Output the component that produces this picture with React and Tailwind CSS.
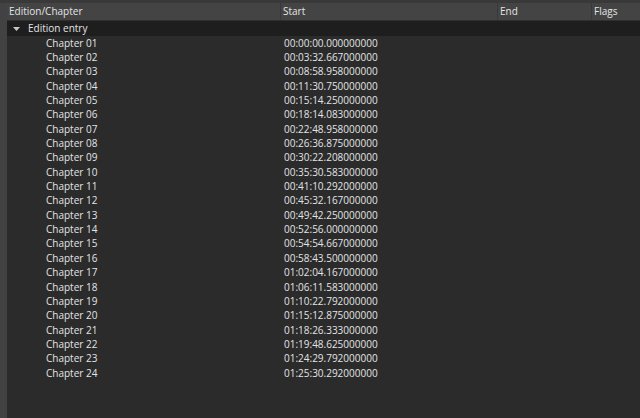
import React from 'react';

const chapters = [
  '00:00:00.000000000', '00:03:32.667000000', '00:08:58.958000000', '00:11:30.750000000',
  '00:15:14.250000000', '00:18:14.083000000', '00:22:48.958000000', '00:26:36.875000000',
  '00:30:22.208000000', '00:35:30.583000000', '00:41:10.292000000', '00:45:32.167000000',
  '00:49:42.250000000', '00:52:56.000000000', '00:54:54.667000000', '00:58:43.500000000',
  '01:02:04.167000000', '01:06:11.583000000', '01:10:22.792000000', '01:15:12.875000000',
  '01:18:26.333000000', '01:19:48.625000000', '01:24:29.792000000', '01:25:30.292000000',
];

const font = { fontFamily: '"Segoe UI", "Open Sans", sans-serif' };

const App = () => {
  return (
    <div className="w-[640px] h-[418px] bg-[#3c3c3c] flex flex-col text-[10px] text-[#e4e4e4] overflow-hidden" style={font}>
      <div className="h-[3px] bg-[#393939]" />
      <div className="flex flex-1 min-h-0">
        <div className="w-[7px] bg-[#424242]" />
        <div className="flex-1 flex flex-col bg-[#2b2b2b]">
          <div className="flex h-[18px] bg-[#444444] border-b border-[#2f2f2f] items-center">
            <div className="w-[274px] pl-[2px] border-r border-[#393939] h-full flex items-center">Edition/Chapter</div>
            <div className="w-[217px] pl-[2px] border-r border-[#393939] h-full flex items-center">Start</div>
            <div className="w-[94px] pl-[2px] border-r border-[#393939] h-full flex items-center">End</div>
            <div className="flex-1 pl-[2px] h-full flex items-center">Flags</div>
          </div>
          <div className="h-[15px] bg-[#1e1e1e] flex items-center">
            <svg width="7" height="4" viewBox="0 0 7 4" className="ml-[6px] mr-[8px]">
              <path d="M0 0 H7 L3.5 4 Z" fill="#c8c8c8" />
            </svg>
            <span>Edition entry</span>
          </div>
          {chapters.map((t, i) => (
            <div key={i} className="h-[14.35px] flex items-center">
              <div className="w-[275px] pl-[39px]">Chapter {String(i + 1).padStart(2, '0')}</div>
              <div className="pl-[2px]">{t}</div>
            </div>
          ))}
        </div>
      </div>
    </div>
  );
};

export default App;
